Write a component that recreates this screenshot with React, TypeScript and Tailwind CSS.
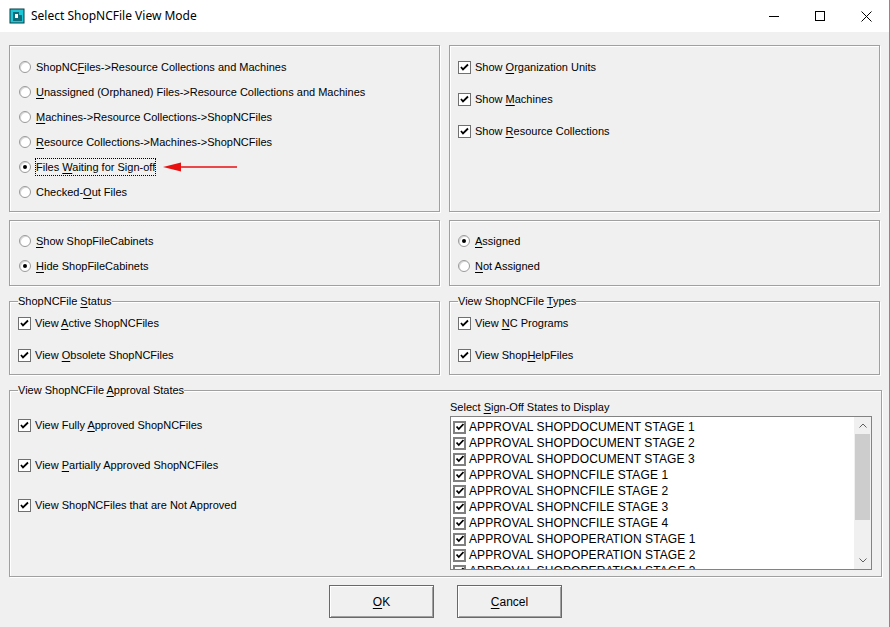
import React from 'react'

const U = ({ children }: { children: React.ReactNode }) => <span className="underline underline-offset-2">{children}</span>

function Radio({ checked, children, focus }: { checked?: boolean; children: React.ReactNode; focus?: boolean }) {
  return (
    <div className="flex h-[16px] items-center gap-[5px]">
      <span className="flex h-[12px] w-[12px] items-center justify-center rounded-full border border-[#9a9a9a] bg-white shadow-[inset_1px_1px_0_#d8d8d8]">
        {checked && <span className="h-[4px] w-[4px] rounded-full bg-black" />}
      </span>
      <span className={focus ? 'outline outline-1 outline-dotted outline-black' : ''}>{children}</span>
    </div>
  )
}

function Check({ children }: { children: React.ReactNode }) {
  return (
    <div className="flex h-[16px] items-center gap-[4px]">
      <span className="flex h-[13px] w-[13px] items-center justify-center border border-[#707070] bg-white">
        <svg width="9" height="9" viewBox="0 0 9 9">
          <path d="M1 4 L3 6.5 L8 1.5" stroke="#000" strokeWidth="1.8" fill="none" />
        </svg>
      </span>
      <span>{children}</span>
    </div>
  )
}

function Box({ className, children }: { className?: string; children: React.ReactNode }) {
  return (
    <div className={`border border-[#a0a0a0] shadow-[inset_1px_1px_0_#fff,1px_1px_0_#fff] ${className ?? ''}`}>{children}</div>
  )
}

function Group({ title, className, children }: { title: React.ReactNode; className?: string; children: React.ReactNode }) {
  return (
    <fieldset className={`border border-[#a0a0a0] shadow-[inset_1px_1px_0_#fff,1px_1px_0_#fff] ${className ?? ''}`}>
      <legend className="ml-[8px] px-0 leading-[12px]">{title}</legend>
      {children}
    </fieldset>
  )
}

const STATES = [
  'APPROVAL SHOPDOCUMENT STAGE 1',
  'APPROVAL SHOPDOCUMENT STAGE 2',
  'APPROVAL SHOPDOCUMENT STAGE 3',
  'APPROVAL SHOPNCFILE STAGE 1',
  'APPROVAL SHOPNCFILE STAGE 2',
  'APPROVAL SHOPNCFILE STAGE 3',
  'APPROVAL SHOPNCFILE STAGE 4',
  'APPROVAL SHOPOPERATION STAGE 1',
  'APPROVAL SHOPOPERATION STAGE 2',
  'APPROVAL SHOPOPERATION STAGE 3',
]

export default function App() {
  return (
    <div className="flex h-[627px] w-[890px] flex-col overflow-hidden border-r border-[#8a8a8a] bg-[#f0f0f0] text-[11px] text-black" style={{ fontFamily: '"Liberation Sans", Arial, sans-serif' }}>
      {/* title bar */}
      <div className="flex h-[32px] shrink-0 items-center bg-white">
        <svg className="ml-[9px]" width="16" height="16" viewBox="0 0 16 16">
          <rect x="1" y="1" width="14" height="14" fill="#1cc8d8" stroke="#0a3a40" />
          <path d="M4 4h6v3h3v6H4z" fill="#0e6c78" />
          <path d="M6 6h3v4H6z" fill="#fff" />
        </svg>
        <span className="ml-[6px] text-[12px]" style={{ fontFamily: '"Noto Sans", sans-serif' }}>Select ShopNCFile View Mode</span>
        <div className="ml-auto flex h-full">
          <div className="flex w-[46px] items-center justify-center">
            <div className="h-px w-[10px] bg-black" />
          </div>
          <div className="flex w-[46px] items-center justify-center">
            <div className="h-[10px] w-[10px] border border-black" />
          </div>
          <div className="flex w-[46px] items-center justify-center">
            <svg width="11" height="11" viewBox="0 0 11 11"><path d="M0.5 0.5l10 10M10.5 0.5l-10 10" stroke="#000" /></svg>
          </div>
        </div>
      </div>

      <div className="flex flex-col px-[9px] pt-[13px]">
        <div className="flex gap-[9px]">
          <Box className="flex h-[167px] w-[432px] flex-col gap-[9px] pl-[9px] pt-[13px]">
            <Radio>ShopNC<U>F</U>iles-&gt;Resource Collections and Machines</Radio>
            <Radio><U>U</U>nassigned (Orphaned) Files-&gt;Resource Collections and Machines</Radio>
            <Radio><U>M</U>achines-&gt;Resource Collections-&gt;ShopNCFiles</Radio>
            <Radio><U>R</U>esource Collections-&gt;Machines-&gt;ShopNCFiles</Radio>
            <div className="flex items-center">
              <Radio checked focus>Files <U>W</U>aiting for Sign-off</Radio>
              <svg className="ml-[8px]" width="74" height="10" viewBox="0 0 74 10">
                <path d="M0 5 L18 0.5 L18 9.5 Z" fill="#e81010" />
                <path d="M16 5 H74" stroke="#e81010" strokeWidth="1.5" />
              </svg>
            </div>
            <Radio>Checked-<U>O</U>ut Files</Radio>
          </Box>
          <Box className="flex h-[167px] w-[432px] flex-col gap-[16px] pl-[8px] pt-[13px]">
            <Check>Show <U>O</U>rganization Units</Check>
            <Check>Show <U>M</U>achines</Check>
            <Check>Show <U>R</U>esource Collections</Check>
          </Box>
        </div>

        <div className="mt-[8px] flex gap-[9px]">
          <Box className="flex h-[66px] w-[432px] flex-col gap-[9px] pl-[9px] pt-[12px]">
            <Radio><U>S</U>how ShopFileCabinets</Radio>
            <Radio checked><U>H</U>ide ShopFileCabinets</Radio>
          </Box>
          <Box className="flex h-[66px] w-[432px] flex-col gap-[9px] pl-[8px] pt-[12px]">
            <Radio checked><U>A</U>ssigned</Radio>
            <Radio><U>N</U>ot Assigned</Radio>
          </Box>
        </div>

        <div className="mt-[9px] flex gap-[9px]">
          <Group title={<>ShopNCFile <U>S</U>tatus</>} className="h-[80px] w-[432px]">
            <div className="flex flex-col gap-[16px] pl-[8px] pt-[8px]">
              <Check>View <U>A</U>ctive ShopNCFiles</Check>
              <Check>View <U>O</U>bsolete ShopNCFiles</Check>
            </div>
          </Group>
          <Group title={<>View ShopNCFile <U>T</U>ypes</>} className="h-[80px] w-[432px]">
            <div className="flex flex-col gap-[16px] pl-[8px] pt-[8px]">
              <Check>View <U>N</U>C Programs</Check>
              <Check>View Shop<U>H</U>elpFiles</Check>
            </div>
          </Group>
        </div>

        <Group title={<>View ShopNCFile <U>A</U>pproval States</>} className="mt-[9px] h-[193px] w-[873px]">
          <div className="flex">
            <div className="flex w-[440px] flex-col gap-[24px] pl-[8px] pt-[21px]">
              <Check>View Fully <U>A</U>pproved ShopNCFiles</Check>
              <Check>View <U>P</U>artially Approved ShopNCFiles</Check>
              <Check>View ShopNCFiles that are Not Approved</Check>
            </div>
            <div className="flex flex-col pt-[4px]">
              <div className="h-[14px] leading-[14px]">Select <U>S</U>ign-Off States to Display</div>
              <div className="mt-[2px] flex h-[154px] w-[422px] overflow-hidden border border-[#828282] bg-white">
                <div className="flex flex-1 flex-col overflow-hidden pl-[2px] pt-[2px]">
                  {STATES.map((s) => (
                    <div key={s} className="flex h-[16px] shrink-0 items-center gap-[3px]">
                      <span className="flex h-[13px] w-[13px] items-center justify-center border-2 border-[#808080] bg-white">
                        <svg width="8" height="8" viewBox="0 0 8 8"><path d="M0.5 3.5 L2.8 6 L7.5 1" stroke="#000" strokeWidth="1.8" fill="none" /></svg>
                      </span>
                      <span className="text-[12px] tracking-[0.1px]">{s}</span>
                    </div>
                  ))}
                </div>
                <div className="flex w-[17px] flex-col bg-[#f0f0f0]">
                  <div className="flex h-[17px] items-center justify-center">
                    <svg width="8" height="5" viewBox="0 0 8 5"><path d="M0.5 4.5 L4 1 L7.5 4.5" stroke="#606060" fill="none" /></svg>
                  </div>
                  <div className="mx-[1px] h-[86px] bg-[#cdcdcd]" />
                  <div className="flex-1" />
                  <div className="flex h-[17px] items-center justify-center">
                    <svg width="8" height="5" viewBox="0 0 8 5"><path d="M0.5 0.5 L4 4 L7.5 0.5" stroke="#606060" fill="none" /></svg>
                  </div>
                </div>
              </div>
            </div>
          </div>
        </Group>

        <div className="mt-[8px] flex justify-center gap-[23px] pl-[2px]">
          <button className="h-[33px] w-[105px] border border-[#696969] bg-[#f0f0f0] text-[12px] shadow-[inset_1px_1px_0_#fff,inset_-1px_-1px_0_#a0a0a0]"><U>O</U>K</button>
          <button className="h-[33px] w-[105px] border border-[#696969] bg-[#f0f0f0] text-[12px] shadow-[inset_1px_1px_0_#fff,inset_-1px_-1px_0_#a0a0a0]"><U>C</U>ancel</button>
        </div>
      </div>
    </div>
  )
}
